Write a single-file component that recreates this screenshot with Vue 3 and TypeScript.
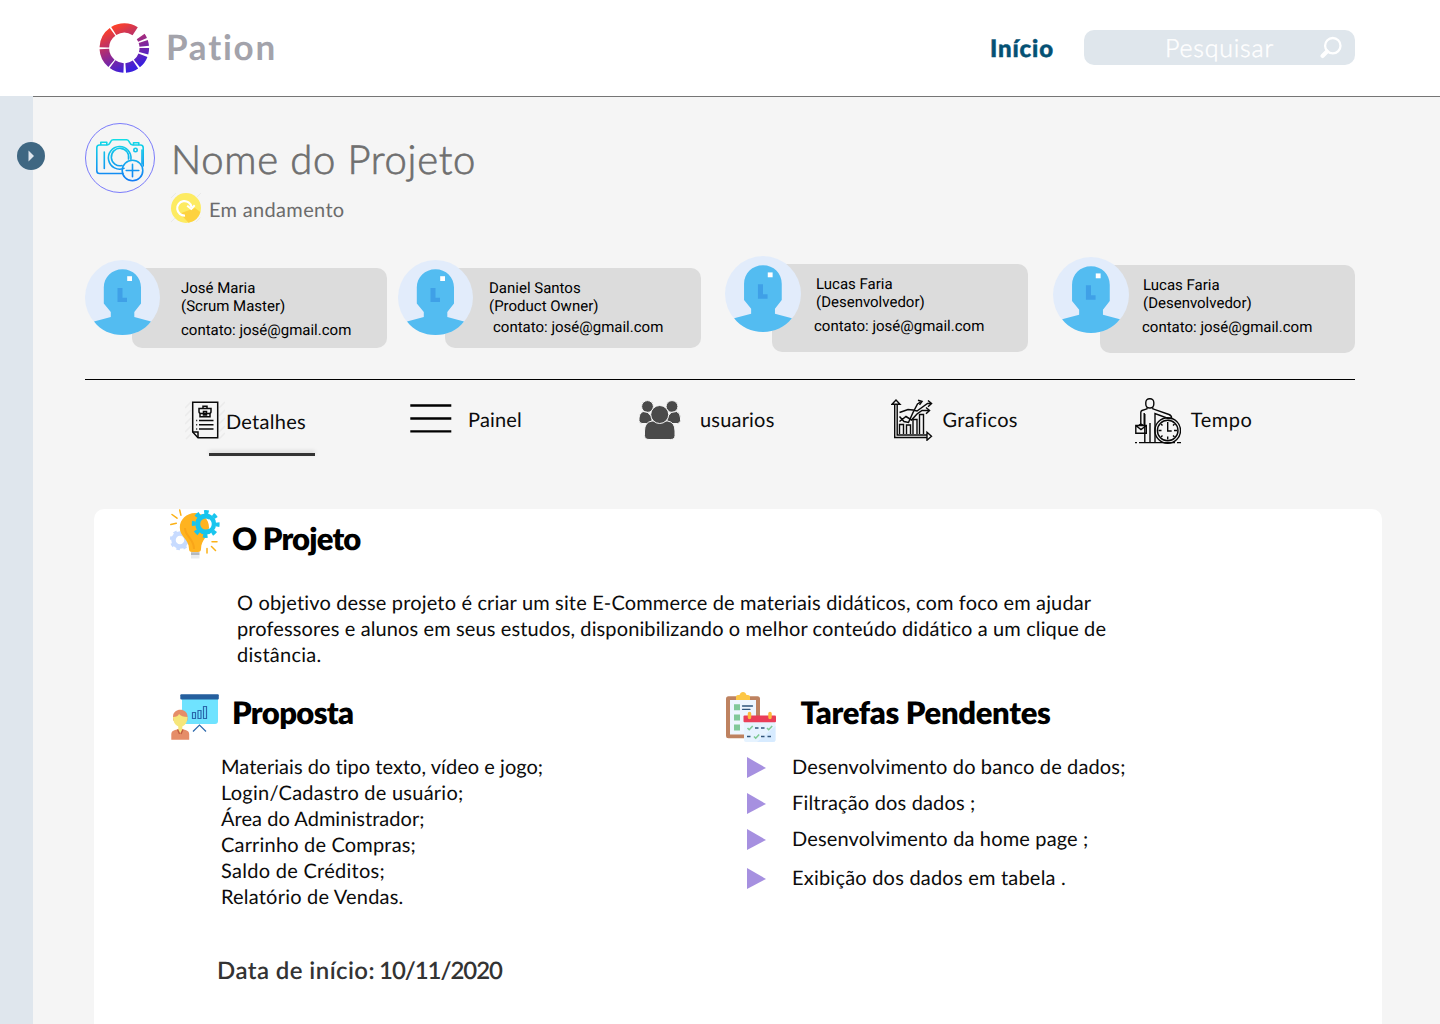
<script setup lang="ts">
interface Member {
  name: string
  role: string
  x: number
  y: number
  avatar: number
  height: number
  width: number
  pad: number
  contactShift: number
  contactGap: number
}

const members: Member[] = [
  { name: 'José Maria', role: '(Scrum Master)', x: 85, y: 260, avatar: 75, width: 255, height: 80, pad: 49, contactShift: 0, contactGap: 6 },
  { name: 'Daniel Santos', role: '(Product Owner)', x: 398, y: 260, avatar: 75, width: 256, height: 80, pad: 44, contactShift: 4, contactGap: 3 },
  { name: 'Lucas Faria', role: '(Desenvolvedor)', x: 725, y: 256, avatar: 76, width: 256, height: 88, pad: 44, contactShift: -2, contactGap: 6 },
  { name: 'Lucas Faria', role: '(Desenvolvedor)', x: 1053, y: 257, avatar: 76, width: 255, height: 88, pad: 43, contactShift: -1, contactGap: 6 },
]

const goals = [
  { text: 'O objetivo desse projeto é criar um site E-Commerce de materiais didáticos, com foco em ajudar', w: 855 },
  { text: 'professores e alunos em seus estudos, disponibilizando o melhor conteúdo didático a um clique de', w: 869.5 },
  { text: 'distância.', w: 84.5 },
]

const proposal = [
  { text: 'Materiais do tipo texto, vídeo e jogo;', w: 322.5 },
  { text: 'Login/Cadastro de usuário;', w: 242.5 },
  { text: 'Área do Administrador;', w: 203.5 },
  { text: 'Carrinho de Compras;', w: 195 },
  { text: 'Saldo de Créditos;', w: 164 },
  { text: 'Relatório de Vendas.', w: 182.5 },
]

const tasks = [
  { text: 'Desenvolvimento do banco de dados;', w: 333.5, gap: 10 },
  { text: 'Filtração dos dados ;', w: 183.5, gap: 10 },
  { text: 'Desenvolvimento da home page ;', w: 296.5, gap: 13 },
  { text: 'Exibição dos dados em tabela .', w: 274, gap: 0 },
]

// Ring segments of the logo, in degrees clockwise from the top
const segments = [[-32, 33], [-88, -36], [-140, -93], [-178, -144], [146, 176], [111, 141], [90, 105], [71, 85], [55, 66]]
function arc([a, b]: number[]): string {
  const p = (d: number) => {
    const r = (d * Math.PI) / 180
    return `${(25.3 + 20 * Math.sin(r)).toFixed(2)} ${(25 - 20 * Math.cos(r)).toFixed(2)}`
  }
  return `M${p(a)} A20 20 0 0 1 ${p(b)}`
}

// Tracks a line of text so that it spans the given width
const vFit = {
  mounted(el: HTMLElement, binding: { value: number }) {
    const range = document.createRange()
    range.selectNodeContents(el)
    const natural = range.getBoundingClientRect().width
    const count = (el.textContent ?? '').length
    el.style.letterSpacing = `${((binding.value - natural) / count).toFixed(3)}px`
  },
}
</script>

<template>
  <div class="page">
    <header class="top">
      <svg class="logo" width="51" height="50" viewBox="0 0 51 50" fill="none">
        <defs>
          <linearGradient id="ring" gradientUnits="userSpaceOnUse" x1="12" y1="5" x2="32" y2="46">
            <stop offset="0" stop-color="#fb402b" />
            <stop offset="0.5" stop-color="#9c2a85" />
            <stop offset="1" stop-color="#3a1fdd" />
          </linearGradient>
        </defs>
        <path v-for="s in segments" :key="s[0]" :d="arc(s)" stroke="url(#ring)" stroke-width="9.6" />
      </svg>
      <span class="brand" v-fit="111.5">Pation</span>
      <nav class="nav"><a class="home" v-fit="64">Início</a></nav>
      <div class="search">
        <span v-fit="109">Pesquisar</span>
        <svg width="24" height="24" viewBox="0 0 24 24" fill="none" stroke="#fff">
          <circle cx="13.8" cy="9.7" r="7.7" stroke-width="2.3" />
          <path d="M8 15.6 3.5 19.9" stroke-width="4.2" stroke-linecap="round" />
        </svg>
      </div>
    </header>

    <div class="body">
      <aside class="side">
        <svg class="toggle" width="28" height="28" viewBox="0 0 28 28">
          <circle cx="14" cy="14" r="14" fill="#3f6782" />
          <path d="M11.5 8.5v11l5.5-5.5z" fill="#dfe6ed" />
        </svg>
      </aside>

      <main class="main">
        <section class="project">
          <svg width="70" height="70" viewBox="0 0 70 70" fill="none">
            <defs>
              <linearGradient id="cam" gradientUnits="userSpaceOnUse" x1="0" y1="16" x2="0" y2="58">
                <stop offset="0" stop-color="#12dfe6" />
                <stop offset="1" stop-color="#127bf5" />
              </linearGradient>
            </defs>
            <circle cx="35" cy="35" r="34.5" stroke="#7a7bfb" />
            <g stroke="url(#cam)" stroke-width="1.6" stroke-linecap="round" stroke-linejoin="round">
              <path d="M38 50.5H14.5q-2.7 0-2.7-2.7V24.7q0-2.7 2.700-2.700H22q2.200-.2 3-2.200l.8-1.500q.8-1.500 2.500-1.500H41.500q1.600 0 2.500 1.500l.8 1.500q.8 2 3 2.200h7.700q2.700 0 2.700 2.700V43" />
              <path d="M15.800 21.500v-2.300h6v2.300M48.500 21.500v-1.800h5.300v1.800M19.300 29v16.500M57 41V27" />
              <circle cx="50.500" cy="27" r="1.700" />
              <path d="M39 45.300A11.300 11.300 0 1 1 45.900 36.300" />
              <path d="M37 42.500A8.700 8.700 0 1 1 43.500 36" />
              <circle cx="47.500" cy="47.500" r="10.300" />
              <path d="M47.500 41.200v12.600M41.200 47.500h12.600" />
            </g>
          </svg>
          <div class="project-text">
            <h1><span v-fit="305">Nome do Projeto</span></h1>
            <p class="status">
              <svg width="30" height="30" viewBox="0 0 30 30" fill="none">
                <path d="M0 5 5 0M0 29 4 25M25 29 29.500 24.500M26 4 30 0" stroke="#e9e9e9" />
                <circle cx="15" cy="15" r="15" fill="#fdeb62" />
                <path d="M9 20.500 24 15l5.300 4A15 15 0 0 1 17.500 29.800z" fill="#fdd23f" />
                <path d="M14 22.500A7.200 7.200 0 1 1 20.500 14" stroke="#fff" stroke-width="2.200" />
                <path d="M16.200 12.700 20.300 16 23.700 12.300" stroke="#fff" stroke-width="2" />
              </svg>
              <span v-fit="135.5">Em andamento</span>
            </p>
          </div>
        </section>

        <section class="members">
          <article
            v-for="(m, i) in members"
            :key="i"
            class="member"
            :style="{ marginLeft: (i ? m.x - members[i - 1].x - members[i - 1].width - 47 : 0) + 'px', marginTop: m.y - 256 + 'px' }"
          >
            <svg class="avatar" :width="m.avatar" :height="m.avatar" viewBox="0 0 75 75" :style="{ marginRight: 47 - m.avatar + 'px' }">
              <circle cx="37.500" cy="37.500" r="37.500" fill="#e2ecfb" />
              <path
                fill="#53bcf1"
                d="M37.500 9.200C48 9.200 56 17 56 27.500V43.500L49.300 52v5L66 61.500C59 70.500 49 75 37.500 75S16 70.500 9 61.500L25.800 57v-5L18.800 43.500V27.500C18.800 17 27 9.200 37.500 9.200z"
              />
              <path d="M32.500 28h5v9.800h4.500v4.300h-9.500z" fill="#3fa0e7" />
              <path d="M42.200 16.200h4.800V21h-4.800z" fill="#fff" />
            </svg>
            <div class="card" :style="{ width: m.width + 'px', height: m.height + 'px', paddingLeft: m.pad + 'px' }">
              <div>{{ m.name }}</div>
              <div>{{ m.role }}</div>
              <div :style="{ marginLeft: m.contactShift + 'px', marginTop: m.contactGap + 'px' }">contato: josé@gmail.com</div>
            </div>
          </article>
        </section>

        <nav class="tabs">
          <a class="tab t1">
            <svg width="40" height="40" viewBox="0 0 40 40" fill="none" stroke="#0a0a0a" stroke-width="1.500">
              <path d="M0 8 7 1M0 16 6 10M0 24 6 18M0 32 6 26M1 39 6 34M34 8 40 2M34 16 40 10M34 24 40 18M34 32 40 26M34 39 40 33" stroke="#ebebeb" />
              <path d="M7.700 2.200h25v35.500H13L7.700 32z" />
              <path d="M7.700 32H13v5.700" />
              <path d="M14 8.500h12v3q0 2-2 2h-8q-2 0-2-2zM15 13.500v3.300h10v-3.300M18 8.500V6.300h4v2.200M18.500 11.500h3v3.500h-3z" />
              <path d="M14 20.500h14.500M14 24.700h14.500M14 28.900h14.500M11.200 20.500h1M11.200 24.700h1M11.200 28.900h1" />
            </svg>
            <span v-fit="80">Detalhes</span>
          </a>
          <a class="tab t2">
            <svg width="42" height="30" viewBox="0 0 42 30" stroke="#000" stroke-width="2.300">
              <path d="M.3 2.500h41M.3 15.500h41M.3 28.300h41" />
            </svg>
            <span v-fit="54">Painel</span>
          </a>
          <a class="tab t3">
            <svg width="42" height="40" viewBox="0 0 42 40" fill="#4a4a4a" stroke="#f5f5f5" stroke-width="1">
              <circle cx="8.500" cy="6.500" r="5.900" />
              <circle cx="33" cy="6.500" r="5.900" />
              <path d="M4 11.500Q0 13 0 18v2.500Q0 23 3 23.500h10V16q-3-1-4-3.500zM37.500 11.500q4 1.500 4 6.500v2.500q0 2.500-3 3H28V16q3-1 4-3.500z" />
              <path d="M13 21Q5.500 22 5.500 31v4.500q0 4 4.500 4H31.500q4.500 0 4.500-4V31q0-9-7.500-10z" />
              <circle cx="20.700" cy="14.500" r="9" />
            </svg>
            <span v-fit="74.5">usuarios</span>
          </a>
          <a class="tab t4">
            <svg width="42" height="42" viewBox="0 0 42 42" fill="none" stroke="#0a0a0a" stroke-width="1.400">
              <path d="M3.700 5v33.500H36M6.200 5v31H36M1 5.200 5 1l4 4.200zM36 33.200l4.500 4-4.500 4z" />
              <path d="M8.500 35V25.500h4V35M15.500 35v-9h4v9M22 35V20.500h4V35M28.500 35V15.500h4V35" />
              <path d="M8.500 13.500 17 10.500 22 11 26 12 36.500 4.500H40M8.500 17.500 13 22.500 17.500 23.500 22 13.500 26.500 5 29.500 3M8.500 22.500 15 17.500 20.500 21 26 15 31 11.500H38" stroke-width="1.500" />
              <path d="m27 1.200 4 1.300-2.500 3.300M37 1.500l3.500 3-3.500 3.200M35 8.500l3.500 3-3.500 3.200" stroke-width="1.500" />
            </svg>
            <span v-fit="75">Graficos</span>
          </a>
          <a class="tab t5">
            <svg width="46" height="46" viewBox="0 0 46 46" fill="none" stroke="#080808" stroke-width="1.400">
              <rect x="10.800" y=".7" width="8" height="9.300" rx="3.700" />
              <path d="M12 9.500v1.300L7 12.500q-1.200.5-1.200 2V27M17.800 9.500v1.300L34 16.500q3 1.300 2.500 4l-3.300 0L20 15.500V45M9.800 16v29M15 25v20M9.200 15v12" />
              <path d="M.8 27.500h10.500v7.700H.8zM.8 27.500 6 31.500l5.300-4M3.500 27.500q2.500-2.500 5 0" />
              <circle cx="32.700" cy="32.500" r="12.800" />
              <circle cx="32.700" cy="32.500" r="10.300" />
              <path d="M32.700 24v9h4M32.700 38.500v3M23.500 32.500h3M39 32.500h3.300M26 26l1.500 1.500M39.500 26 38 27.500M26 39l1.500-1.500M39.500 39 38 37.500M0 44.600h2M4 44.600h36M42 44.600h4" />
            </svg>
            <span v-fit="61.5">Tempo</span>
          </a>
        </nav>
        <div class="marker"></div>

        <section class="panel">
          <div class="head">
            <svg width="50" height="50" viewBox="0 0 50 50" fill="none">
              <circle cx="10" cy="31" r="6.500" stroke="#c7dbff" stroke-width="4.500" />
              <circle cx="10" cy="31" r="9" stroke="#c7dbff" stroke-width="2.500" stroke-dasharray="3.500 3.570" />
              <path d="M25 4C16.500 4 9.800 10.500 9.800 18.500 9.800 28 19 30 19 40q0 3 3 3h6q3 0 3-3c0-10 8-12 8-21.500C39 10.500 33 4 25 4z" fill="#ffb31f" />
              <path d="M15 19c0 9 9 10 9 21" stroke="#f9a519" stroke-width="2" />
              <path d="M21 43.200h8.500v3H21z" fill="#b5b9be" /><path d="M21 46.200h8.500v3.300H21z" fill="#e8eaed" />
              <circle cx="35.700" cy="15" r="8" stroke="#18c5ee" stroke-width="5" />
              <circle cx="35.700" cy="15" r="12" stroke="#18c5ee" stroke-width="3.800" stroke-dasharray="4.600 4.825" stroke-dashoffset="2" />
              <path d="M38.500 9.700a6 6 0 0 1 0 10.600q3-5.300 0-10.600z" fill="#fff" />
              <path d="m2 5.500 5 3.700M9.700 1l1.200 5.200M.8 15.500l5.500-1.300M42 32.700h5M41.500 37.500l4 4M37 39.500V44" stroke="#fbb116" stroke-width="1.500" stroke-linecap="round" />
            </svg>
            <h2><span v-fit="128.5">O Projeto</span></h2>
          </div>
          <div class="goal">
            <div v-for="g in goals" :key="g.text"><span v-fit="g.w">{{ g.text }}</span></div>
          </div>

          <div class="columns">
            <div class="col-left">
              <div class="head">
                <svg width="50" height="50" viewBox="0 0 50 50" fill="none">
                  <path d="M12 7h36v22q0 3-3 3H15q-3 0-3-3z" fill="#6fe3ff" />
                  <rect x="10.300" y="2.300" width="38.500" height="5.200" rx="1" fill="#255f9e" />
                  <path d="M22.500 20.500h3v6h-3zM28 18.500h3v8h-3zM33.500 14.500h3v12h-3zM23 39.500l6.500-6.500 6.500 6.500" stroke="#2b68ac" stroke-width="1.200" />
                  <path d="M3 28.500v-4C3 15.500 17.500 15.500 17.500 24.500v4z" fill="#e58d68" />
                  <path d="M1.300 47.700V42Q1.300 39 5 38l4-1h3l3.500 1q3.700 1 3.700 4v5.700z" fill="#e58d68" />
                  <path d="M3 25Q8 25 9 22 11.500 25 17.500 25q0 7-5.200 9.500v3.200L10.300 41 8.300 37.700v-3.200Q3 32 3 25z" fill="#f6e67b" />
                  <path d="M7.500 37.500 9.500 42M13 37.500 11 42" stroke="#c15e40" stroke-width="1.300" />
                </svg>
                <h2><span v-fit="121.5">Proposta</span></h2>
              </div>
              <div class="proposal">
                <div v-for="p in proposal" :key="p.text"><span v-fit="p.w">{{ p.text }}</span></div>
              </div>
            </div>
            <div class="col-right">
              <div class="head">
                <svg width="50" height="50" viewBox="0 0 50 50" fill="none">
                  <rect x="0" y="4.300" width="34" height="42" rx="2.500" fill="#be8260" />
                  <path d="M4 8h26v34.500H4z" fill="#eef6ff" />
                  <path d="M10 8V4.500q0-1.500 2-1.500h1.500q1-3 3.500-3t3.500 3H22q2 0 2 1.500V8z" fill="#fdc746" />
                  <path d="M8 12.300h6v6H8zM8 22.500h6v6H8zM8 32.500h6v6H8z" fill="#81c99a" />
                  <path d="M16.500 14h10M16.500 17.300h7.500" stroke="#31567c" stroke-width="1.300" stroke-linecap="round" />
                  <path d="M18 29h31.500v18.500q0 2.500-2.500 2.500H20q-2 0-2-2z" fill="#e6f3ff" />
                  <path d="M31 50 49.500 34v13.500q0 2.500-2.500 2.500z" fill="#d7ebff" />
                  <rect x="17.500" y="23.500" width="32.500" height="6.700" rx="1" fill="#ea3d58" />
                  <path d="M23.500 21.500v4M44 21.500v4" stroke="#fdb93d" stroke-width="3.500" stroke-linecap="round" />
                  <path d="m21.500 36 1.700 1.700 3.500-3.700M41 36l1.700 1.700 3.500-3.700M28 44.500l1.700 1.700 3.500-3.700" stroke="#7fcb94" stroke-width="1.600" />
                  <path d="M29 36h3.500M35 36h3.500M21 44.500h3.500M35 44.500h3.500M41.500 44.500H45" stroke="#31567c" stroke-width="1.400" />
                </svg>
                <h2><span v-fit="250">Tarefas Pendentes</span></h2>
              </div>
              <ul class="tasks">
                <li v-for="t in tasks" :key="t.text" :style="{ marginBottom: t.gap + 'px' }">
                  <i></i><span v-fit="t.w">{{ t.text }}</span>
                </li>
              </ul>
            </div>
          </div>
          <div class="start"><span v-fit="158">Data de início:</span><span v-fit="123">10/11/2020</span></div>
        </section>
      </main>
    </div>
  </div>
</template>

<style>
body {
  margin: 0;
  background: #f5f5f5;
}
</style>

<style scoped>
.page {
  height: 1024px;
  overflow: hidden;
  display: flex;
  flex-direction: column;
  font-family: Lato, 'Open Sans', sans-serif;
  font-size: 20px;
  line-height: 26px;
  color: #0c0c0c;
  text-rendering: geometricPrecision;
  white-space: nowrap;
}
.page * {
  box-sizing: border-box;
}
svg {
  display: block;
  flex: none;
}
.top {
  height: 96px;
  flex: none;
  display: flex;
  align-items: center;
  background: #fff;
  padding: 0 85px 0 99px;
}
.brand {
  margin: 0 0 1px 16px;
  font-size: 35px;
  line-height: 95px;
  font-weight: 700;
  color: #a3a3ab;
}
.nav {
  margin: 2px 30px 0 auto;
}
.home {
  font-size: 24px;
  font-weight: 900;
  color: #045174;
  -webkit-text-stroke: 0.5px #045174;
}
.search {
  width: 271px;
  height: 35px;
  border-radius: 10px;
  background: #dfe6ec;
  color: #fff;
  display: flex;
  align-items: center;
  padding-left: 81px;
  padding-right: 12px;
  justify-content: space-between;
  font-size: 25px;
  font-weight: 300;
  -webkit-text-stroke: 0.4px #fff;
  margin-bottom: 1px;
}
.search svg {
  -webkit-text-stroke: 0;
}
.body {
  flex: 1;
  display: flex;
}
.side {
  width: 33px;
  background: #dfe6ed;
  padding: 46px 0 0 17px;
}
.toggle {
  position: relative;
}
.main {
  flex: 1;
  border-top: 1px solid #757575;
  padding: 26px 0 0 52px;
  display: flex;
  flex-direction: column;
}
.project {
  display: flex;
  height: 133px;
}
.project-text {
  margin-left: 16px;
}
h1 {
  margin: 11px 0 0;
  font-size: 40px;
  line-height: 50px;
  font-weight: 300;
  color: #6f6f6f;
  -webkit-text-stroke: 0.7px #6f6f6f;
}
.status {
  margin: 9px 0 0;
  display: flex;
  align-items: center;
  gap: 8px;
  color: #6c6c6c;
}
.status span {
  margin-top: 3px;
}
.members {
  display: flex;
  align-items: flex-start;
  height: 124px;
  width: 1270px;
  border-bottom: 1px solid #000;
}
.member {
  display: flex;
}
.avatar {
  position: relative;
}
.card {
  margin-top: 8px;
  padding-top: 11px;
  border-radius: 10px;
  background: #dcdcdc;
  font-family: Roboto, sans-serif;
  font-size: 15px;
  line-height: 18px;
  color: #000;
}
.tabs {
  height: 73px;
  display: flex;
  align-items: flex-start;
}
.tab {
  display: flex;
  align-items: center;
}
.t1 {
  margin: 20px 0 0 100px;
}
.t1 span {
  margin: 4px 0 0 1px;
}
.t2 {
  margin: 23px 0 0 104px;
}
.t2 span {
  margin: 4px 0 0 16px;
}
.t3 {
  margin: 20px 0 0 117px;
}
.t3 span {
  margin: 0 0 0 19px;
}
.t4 {
  margin: 19px 0 0 116px;
}
.t4 span {
  margin: 0 0 1px 10px;
}
.t5 {
  margin: 18px 0 0 117px;
}
.t5 span {
  margin: 0 0 3px 10px;
}
.marker {
  width: 106px;
  height: 3px;
  margin-left: 124px;
  background: #333;
  box-shadow: 0 -2px 4px rgba(0, 0, 0, 0.14);
}
.panel {
  flex: 1;
  width: 1288px;
  margin: 53px 0 0 9px;
  border-radius: 10px 10px 0 0;
  background: #fff;
}
.head {
  display: flex;
  margin-left: 76px;
  height: 50px;
}
h2 {
  margin: 13px 0 0 12px;
  font-size: 31px;
  line-height: 32px;
  font-weight: 800;
  color: #000;
}
.goal {
  margin: 31px 0 0 143px;
}
.columns {
  display: flex;
  margin-top: 24px;
}
.col-left {
  width: 556px;
}
.col-left h2,
.col-right h2 {
  margin-top: 4px;
}
.proposal {
  margin: 12px 0 0 127px;
}
.col-right .head {
  margin-left: 76px;
}
.col-right h2 {
  margin-left: 24.500px;
}
.tasks {
  margin: 12px 0 0 97px;
  padding: 0;
  list-style: none;
}
.tasks li {
  display: flex;
  align-items: center;
  height: 26px;
}
.tasks i {
  border-left: 19px solid #a690e0;
  border-top: 11px solid transparent;
  border-bottom: 10px solid transparent;
  margin: 1px 26px 0 0;
}
.start {
  display: flex;
  gap: 4px;
  margin: 48px 0 0 123px;
  font-size: 24px;
  font-weight: 600;
  color: #333;
}
</style>
